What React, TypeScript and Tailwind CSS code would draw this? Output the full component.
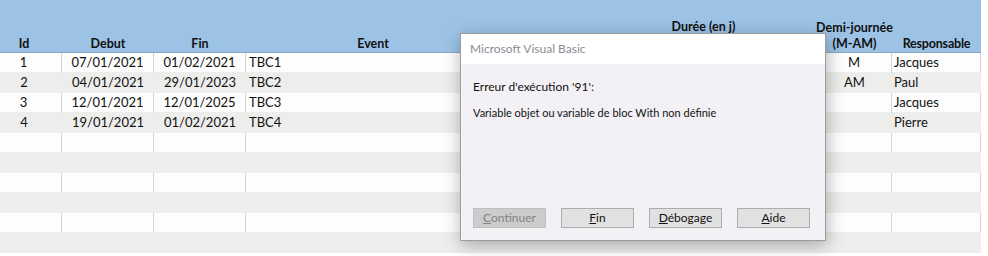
import React from 'react';

type Row = {
  id: string;
  debut: string;
  fin: string;
  event: string;
  demi: string;
  resp: string;
};

const rows: Row[] = [
  { id: '1', debut: '07/01/2021', fin: '01/02/2021', event: 'TBC1', demi: 'M', resp: 'Jacques' },
  { id: '2', debut: '04/01/2021', fin: '29/01/2023', event: 'TBC2', demi: 'AM', resp: 'Paul' },
  { id: '3', debut: '12/01/2021', fin: '12/01/2025', event: 'TBC3', demi: '', resp: 'Jacques' },
  { id: '4', debut: '19/01/2021', fin: '01/02/2021', event: 'TBC4', demi: '', resp: 'Pierre' },
];

const empty: Row = { id: '', debut: '', fin: '', event: '', demi: '', resp: '' };
const allRows = [...rows, ...Array.from({ length: 6 }, () => empty)];

const cols = 'grid grid-cols-[62px_92px_92px_254px_88px_229px_75px_89px]';

const SheetRow: React.FC<{ row: Row; striped: boolean }> = ({ row, striped }) => {
  const cell = striped ? '' : 'border-r border-[#d4d4d4]';
  return (
    <div
      className={`${cols} items-center ${
        striped ? 'h-[21px] bg-[#ededeb]' : 'h-[19px] bg-[#fcfdfc]'
      }`}
    >
      <div className={`h-full flex items-center justify-center pr-[14px] ${cell}`}>{row.id}</div>
      <div className={`h-full flex items-center justify-center ${cell}`}>{row.debut}</div>
      <div className={`h-full flex items-center justify-center ${cell}`}>{row.fin}</div>
      <div className="h-full flex items-center pl-[3px]">{row.event}</div>
      <div className="h-full" />
      <div className={`h-full ${cell}`} />
      <div className={`h-full flex items-center justify-center ${cell}`}>{row.demi}</div>
      <div className={`h-full flex items-center pl-[2px] ${cell}`}>{row.resp}</div>
    </div>
  );
};

const DlgButton: React.FC<{ first: string; rest: string; disabled?: boolean }> = ({
  first,
  rest,
  disabled,
}) => (
  <div
    className={`w-[73px] h-[20px] flex items-center justify-center border ${
      disabled
        ? 'bg-[#cccccc] border-[#bfbfbf] text-[#838383]'
        : 'bg-[#e1e1e1] border-[#adadad] text-[#111]'
    }`}
  >
    <span>
      <u>{first}</u>
      {rest}
    </span>
  </div>
);

export default function App() {
  return (
    <div className="relative w-[988px] h-[256px] overflow-hidden bg-white text-[13px] text-[#111] font-['Lato',sans-serif]">
      <div className="w-[981px]">
        <div className={`${cols} h-[53px] bg-[#9cc3e6] border-b border-[#8ba6c0] font-bold text-[12.5px] leading-[16px] text-[#111]`}>
          <div className="flex items-end justify-center pr-[14px]">Id</div>
          <div className="flex items-end justify-center">Debut</div>
          <div className="flex items-end justify-center">Fin</div>
          <div className="flex items-end justify-center">Event</div>
          <div />
          <div className="flex items-start justify-center pt-[19px] pl-[2px]">Durée (en j)</div>
          <div className="flex flex-col items-center justify-end whitespace-nowrap">
            <span>Demi-journée</span>
            <span>(M-AM)</span>
          </div>
          <div className="flex items-end justify-center tracking-[-0.2px]">Responsable</div>
        </div>
        {allRows.map((r, i) => (
          <SheetRow key={i} row={r} striped={i % 2 === 1} />
        ))}
      </div>

      <div className="absolute left-[460px] top-[33px] w-[366px] h-[208px] flex flex-col border border-[#9d9d9d] bg-[#f3f1f5] shadow-[1px_4px_16px_rgba(0,0,0,0.3)] font-['Lato',sans-serif] text-[12px] text-[#111]">
        <div className="h-[30px] bg-white flex items-center pl-[9px] text-[#8e8a94]">
          Microsoft Visual Basic
        </div>
        <div className="flex-1 flex flex-col pl-[12px]">
          <div className="mt-[14px] leading-[18px]">Erreur d'exécution '91':</div>
          <div className="mt-[8px] leading-[18px] text-[11px]">
            Variable objet ou variable de bloc With non définie
          </div>
          <div className="mt-auto mb-[12px] flex gap-[15px]">
            <DlgButton first="C" rest="ontinuer" disabled />
            <DlgButton first="F" rest="in" />
            <DlgButton first="D" rest="ébogage" />
            <DlgButton first="A" rest="ide" />
          </div>
        </div>
      </div>
    </div>
  );
}
